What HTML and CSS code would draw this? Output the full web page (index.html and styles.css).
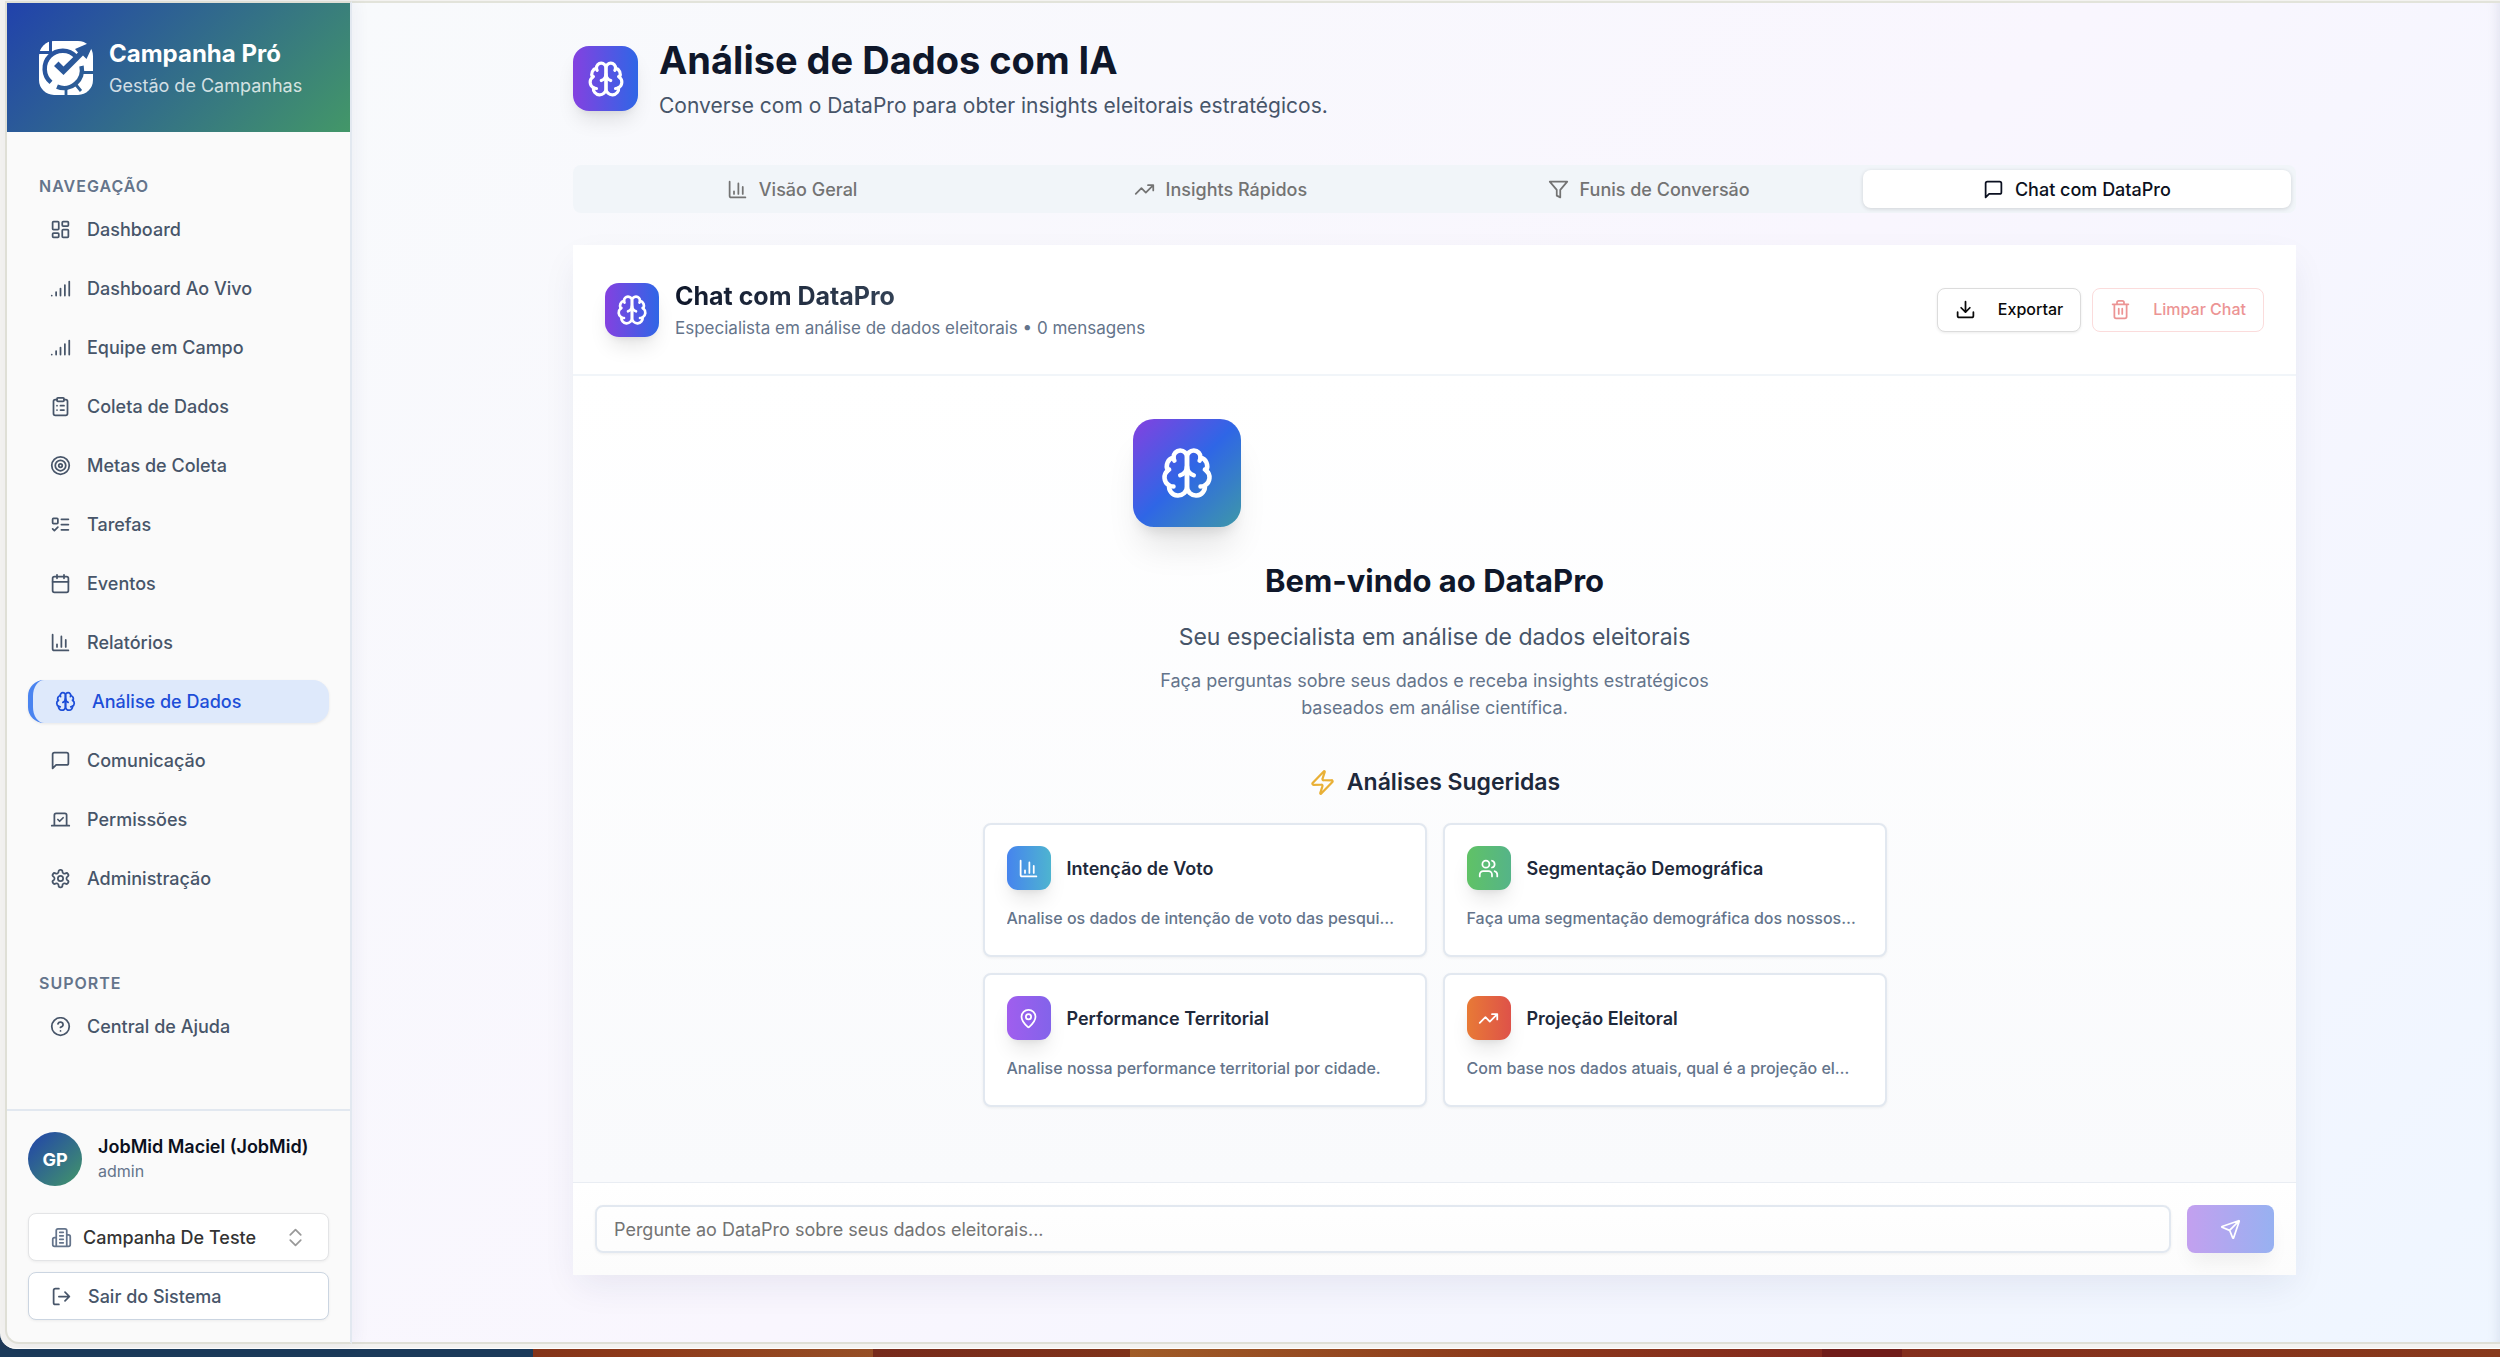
FILE: index.html
```html
<!DOCTYPE html>
<html lang="pt-BR">
<head>
<meta charset="utf-8">
<meta name="viewport" content="width=device-width, initial-scale=1">
<title>Campanha Pró – Análise de Dados com IA</title>
<link rel="stylesheet" href="styles.css">
</head>
<body>
<svg class="sprite" aria-hidden="true">
  <symbol id="i-dashboard" viewBox="0 0 24 24"><rect width="7" height="9" x="3" y="3" rx="1"/><rect width="7" height="5" x="14" y="3" rx="1"/><rect width="7" height="9" x="14" y="12" rx="1"/><rect width="7" height="5" x="3" y="16" rx="1"/></symbol>
  <symbol id="i-signal" viewBox="0 0 24 24"><path d="M2 20h.01M7 20v-4M12 20v-8M17 20V8M22 4v16"/></symbol>
  <symbol id="i-clipboard" viewBox="0 0 24 24"><rect width="8" height="4" x="8" y="2" rx="1"/><path d="M16 4h2a2 2 0 0 1 2 2v14a2 2 0 0 1-2 2H6a2 2 0 0 1-2-2V6a2 2 0 0 1 2-2h2M12 11h4M12 16h4M8 11h.01M8 16h.01"/></symbol>
  <symbol id="i-target" viewBox="0 0 24 24"><circle cx="12" cy="12" r="10"/><circle cx="12" cy="12" r="6"/><circle cx="12" cy="12" r="2"/></symbol>
  <symbol id="i-tasks" viewBox="0 0 24 24"><rect x="3" y="5" width="6" height="6" rx="1"/><path d="m3 17 2 2 4-4M13 6h8M13 12h8M13 18h8"/></symbol>
  <symbol id="i-calendar" viewBox="0 0 24 24"><path d="M8 2v4M16 2v4M3 10h18"/><rect width="18" height="18" x="3" y="4" rx="2"/></symbol>
  <symbol id="i-chart" viewBox="0 0 24 24"><path d="M3 3v16a2 2 0 0 0 2 2h16M18 17V9M13 17V5M8 17v-3"/></symbol>
  <symbol id="i-brain" viewBox="0 0 24 24"><path d="M12 5a3 3 0 1 0-5.997.125 4 4 0 0 0-2.526 5.77 4 4 0 0 0 .556 6.588A4 4 0 1 0 12 18Z"/><path d="M12 5a3 3 0 1 1 5.997.125 4 4 0 0 1 2.526 5.77 4 4 0 0 1-.556 6.588A4 4 0 1 1 12 18Z"/><path d="M15 13a4.5 4.5 0 0 1-3-4 4.5 4.5 0 0 1-3 4M17.599 6.5a3 3 0 0 0 .399-1.375M6.003 5.125A3 3 0 0 0 6.401 6.5M3.477 10.896a4 4 0 0 1 .585-.396M19.938 10.5a4 4 0 0 1 .585.396M6 18a4 4 0 0 1-1.967-.516M19.967 17.484A4 4 0 0 1 18 18"/></symbol>
  <symbol id="i-message" viewBox="0 0 24 24"><path d="M21 15a2 2 0 0 1-2 2H7l-4 4V5a2 2 0 0 1 2-2h14a2 2 0 0 1 2 2z"/></symbol>
  <symbol id="i-vote" viewBox="0 0 24 24"><path d="m9 12 2 2 4-4M5 7c0-1.1.9-2 2-2h10a2 2 0 0 1 2 2v12H5V7ZM22 19H2"/></symbol>
  <symbol id="i-settings" viewBox="0 0 24 24"><path d="M12.22 2h-.44a2 2 0 0 0-2 2v.18a2 2 0 0 1-1 1.73l-.43.25a2 2 0 0 1-2 0l-.15-.08a2 2 0 0 0-2.73.73l-.22.38a2 2 0 0 0 .73 2.73l.15.1a2 2 0 0 1 1 1.72v.51a2 2 0 0 1-1 1.74l-.15.09a2 2 0 0 0-.73 2.73l.22.38a2 2 0 0 0 2.73.73l.15-.08a2 2 0 0 1 2 0l.43.25a2 2 0 0 1 1 1.73V20a2 2 0 0 0 2 2h.44a2 2 0 0 0 2-2v-.18a2 2 0 0 1 1-1.73l.43-.25a2 2 0 0 1 2 0l.15.08a2 2 0 0 0 2.73-.73l.22-.39a2 2 0 0 0-.73-2.73l-.15-.08a2 2 0 0 1-1-1.74v-.5a2 2 0 0 1 1-1.74l.15-.09a2 2 0 0 0 .73-2.73l-.22-.38a2 2 0 0 0-2.73-.73l-.15.08a2 2 0 0 1-2 0l-.43-.25a2 2 0 0 1-1-1.73V4a2 2 0 0 0-2-2z"/><circle cx="12" cy="12" r="3"/></symbol>
  <symbol id="i-help" viewBox="0 0 24 24"><circle cx="12" cy="12" r="10"/><path d="M9.09 9a3 3 0 0 1 5.83 1c0 2-3 3-3 3M12 17h.01"/></symbol>
  <symbol id="i-building" viewBox="0 0 24 24"><path d="M6 22V4a2 2 0 0 1 2-2h8a2 2 0 0 1 2 2v18ZM6 12H4a2 2 0 0 0-2 2v6a2 2 0 0 0 2 2h2M18 9h2a2 2 0 0 1 2 2v9a2 2 0 0 1-2 2h-2M10 6h4M10 10h4M10 14h4M10 18h4"/></symbol>
  <symbol id="i-chevrons" viewBox="0 0 24 24"><path d="m6 15 6 6 6-6M6 9l6-6 6 6"/></symbol>
  <symbol id="i-logout" viewBox="0 0 24 24"><path d="M9 21H5a2 2 0 0 1-2-2V5a2 2 0 0 1 2-2h4M16 17l5-5-5-5M21 12H9"/></symbol>
  <symbol id="i-trend" viewBox="0 0 24 24"><path d="m22 7-8.500 8.500-5-5L2 17M16 7h6v6"/></symbol>
  <symbol id="i-funnel" viewBox="0 0 24 24"><path d="M22 3H2l8 9.460V19l4 2v-8.540L22 3z"/></symbol>
  <symbol id="i-download" viewBox="0 0 24 24"><path d="M21 15v4a2 2 0 0 1-2 2H5a2 2 0 0 1-2-2v-4M7 10l5 5 5-5M12 15V3"/></symbol>
  <symbol id="i-trash" viewBox="0 0 24 24"><path d="M3 6h18M19 6v14a2 2 0 0 1-2 2H7a2 2 0 0 1-2-2V6M8 6V4a2 2 0 0 1 2-2h4a2 2 0 0 1 2 2v2M10 11v6M14 11v6"/></symbol>
  <symbol id="i-zap" viewBox="0 0 24 24"><path d="M4 14a1 1 0 0 1-.78-1.630l9.900-10.200a.5.5 0 0 1 .86.460l-1.920 6.020A1 1 0 0 0 13 10h7a1 1 0 0 1 .78 1.630l-9.900 10.200a.5.5 0 0 1-.86-.460l1.920-6.020A1 1 0 0 0 11 14z"/></symbol>
  <symbol id="i-users" viewBox="0 0 24 24"><path d="M16 21v-2a4 4 0 0 0-4-4H6a4 4 0 0 0-4 4v2"/><circle cx="9" cy="7" r="4"/><path d="M22 21v-2a4 4 0 0 0-3-3.870M16 3.130a4 4 0 0 1 0 7.750"/></symbol>
  <symbol id="i-pin" viewBox="0 0 24 24"><path d="M20 10c0 4.993-5.539 10.193-7.399 11.799a1 1 0 0 1-1.202 0C9.539 20.193 4 14.993 4 10a8 8 0 0 1 16 0"/><circle cx="12" cy="10" r="3"/></symbol>
  <symbol id="i-send" viewBox="0 0 24 24"><path d="M14.536 21.686a.5.5 0 0 0 .937-.024l6.500-19a.496.496 0 0 0-.635-.635l-19 6.500a.5.5 0 0 0-.024.937l7.930 3.180a2 2 0 0 1 1.112 1.110zM21.854 2.147l-10.940 10.939"/></symbol>
</svg>

<div class="desktop">
  <div class="window">
    <aside class="sidebar">
      <header class="brand">
        <svg class="brand-logo" viewBox="0 0 54 54" aria-hidden="true">
          <defs>
            <mask id="logo-mask">
              <rect width="54" height="54" rx="15" fill="#fff"/>
              <path d="M11.500 0V12.500M0 11.500H13" fill="none" stroke="#000" stroke-width="3"/>
              <path d="M37 15.600A18 18 0 1 0 12 41.400M42.500 25A18 18 0 0 1 18 45.600" fill="none" stroke="#000" stroke-width="4.500"/>
              <path d="M44 31.500H54M27 46V54M35.500 42L42 50" stroke="#000" stroke-width="2.800"/>
              <path d="M15 25L19.500 20.500L24.500 25.500L39 11.500L36 8L50 2L54 0L54 4L47.500 18L44 14.500L24.500 34Z" fill="#000"/>
            </mask>
          </defs>
          <rect width="54" height="54" fill="#fff" mask="url(#logo-mask)"/>
        </svg>
        <div class="brand-text">
          <p class="brand-name">Campanha Pró</p>
          <p class="brand-tag">Gestão de Campanhas</p>
        </div>
      </header>

      <nav class="nav" aria-label="Navegação">
        <h2 class="nav-label">Navegação</h2>
        <ul class="nav-list">
          <li><a class="nav-item" href="#"><svg class="icon"><use href="#i-dashboard"/></svg>Dashboard</a></li>
          <li><a class="nav-item" href="#"><svg class="icon"><use href="#i-signal"/></svg>Dashboard Ao Vivo</a></li>
          <li><a class="nav-item" href="#"><svg class="icon"><use href="#i-signal"/></svg>Equipe em Campo</a></li>
          <li><a class="nav-item" href="#"><svg class="icon"><use href="#i-clipboard"/></svg>Coleta de Dados</a></li>
          <li><a class="nav-item" href="#"><svg class="icon"><use href="#i-target"/></svg>Metas de Coleta</a></li>
          <li><a class="nav-item" href="#"><svg class="icon"><use href="#i-tasks"/></svg>Tarefas</a></li>
          <li><a class="nav-item" href="#"><svg class="icon"><use href="#i-calendar"/></svg>Eventos</a></li>
          <li><a class="nav-item" href="#"><svg class="icon"><use href="#i-chart"/></svg>Relatórios</a></li>
          <li><a class="nav-item nav-item-active" href="#" aria-current="page"><svg class="icon"><use href="#i-brain"/></svg>Análise de Dados</a></li>
          <li><a class="nav-item" href="#"><svg class="icon"><use href="#i-message"/></svg>Comunicação</a></li>
          <li><a class="nav-item" href="#"><svg class="icon"><use href="#i-vote"/></svg>Permissões</a></li>
          <li><a class="nav-item" href="#"><svg class="icon"><use href="#i-settings"/></svg>Administração</a></li>
        </ul>
      </nav>
      <nav class="nav" aria-label="Suporte">
        <h2 class="nav-label">Suporte</h2>
        <ul class="nav-list">
          <li><a class="nav-item" href="#"><svg class="icon"><use href="#i-help"/></svg>Central de Ajuda</a></li>
        </ul>
      </nav>

      <footer class="account">
        <div class="user">
          <span class="avatar">GP</span>
          <div>
            <p class="user-name">JobMid Maciel (JobMid)</p>
            <p class="user-role">admin</p>
          </div>
        </div>
        <button class="side-button campaign" type="button"><svg class="icon"><use href="#i-building"/></svg><span>Campanha De Teste</span><svg class="icon campaign-arrows"><use href="#i-chevrons"/></svg></button>
        <button class="side-button logout" type="button"><svg class="icon"><use href="#i-logout"/></svg>Sair do Sistema</button>
      </footer>
    </aside>

    <main class="main">
      <div class="content">
        <header class="page-head">
          <span class="tile tile-page"><svg class="icon"><use href="#i-brain"/></svg></span>
          <div>
            <h1 class="page-title">Análise de Dados com IA</h1>
            <p class="page-sub">Converse com o DataPro para obter insights eleitorais estratégicos.</p>
          </div>
        </header>

        <div class="tabs" role="tablist">
          <button class="tab" type="button" role="tab" aria-selected="false"><svg class="icon"><use href="#i-chart"/></svg>Visão Geral</button>
          <button class="tab" type="button" role="tab" aria-selected="false"><svg class="icon"><use href="#i-trend"/></svg>Insights Rápidos</button>
          <button class="tab" type="button" role="tab" aria-selected="false"><svg class="icon"><use href="#i-funnel"/></svg>Funis de Conversão</button>
          <button class="tab tab-active" type="button" role="tab" aria-selected="true"><svg class="icon"><use href="#i-message"/></svg>Chat com DataPro</button>
        </div>

        <section class="chat">
          <header class="chat-head">
            <span class="tile tile-chat"><svg class="icon"><use href="#i-brain"/></svg></span>
            <div class="chat-heading">
              <h2 class="chat-title">Chat com DataPro</h2>
              <p class="chat-sub">Especialista em análise de dados eleitorais • 0 mensagens</p>
            </div>
            <button class="chat-action" type="button"><svg class="icon"><use href="#i-download"/></svg>Exportar</button>
            <button class="chat-action chat-clear" type="button" disabled><svg class="icon"><use href="#i-trash"/></svg>Limpar Chat</button>
          </header>

          <div class="chat-body">
            <div class="welcome">
              <span class="tile tile-hero"><svg class="icon"><use href="#i-brain"/></svg></span>
              <h3 class="welcome-title">Bem-vindo ao DataPro</h3>
              <p class="welcome-lead">Seu especialista em análise de dados eleitorais</p>
              <p class="welcome-text">Faça perguntas sobre seus dados e receba insights estratégicos baseados em análise científica.</p>
            </div>
            <h4 class="suggest-title"><svg class="icon"><use href="#i-zap"/></svg>Análises Sugeridas</h4>
            <div class="suggestions">
              <button class="suggestion" type="button">
                <span class="suggestion-head"><span class="tile tile-blue"><svg class="icon"><use href="#i-chart"/></svg></span>Intenção de Voto</span>
                <span class="suggestion-text">Analise os dados de intenção de voto das pesqui…</span>
              </button>
              <button class="suggestion" type="button">
                <span class="suggestion-head"><span class="tile tile-green"><svg class="icon"><use href="#i-users"/></svg></span>Segmentação Demográfica</span>
                <span class="suggestion-text">Faça uma segmentação demográfica dos nossos…</span>
              </button>
              <button class="suggestion" type="button">
                <span class="suggestion-head"><span class="tile tile-purple"><svg class="icon"><use href="#i-pin"/></svg></span>Performance Territorial</span>
                <span class="suggestion-text">Analise nossa performance territorial por cidade.</span>
              </button>
              <button class="suggestion" type="button">
                <span class="suggestion-head"><span class="tile tile-orange"><svg class="icon"><use href="#i-trend"/></svg></span>Projeção Eleitoral</span>
                <span class="suggestion-text">Com base nos dados atuais, qual é a projeção el…</span>
              </button>
            </div>
          </div>

          <form class="composer">
            <input class="composer-input" type="text" aria-label="Mensagem" placeholder="Pergunte ao DataPro sobre seus dados eleitorais...">
            <button class="composer-send" type="button" aria-label="Enviar"><svg class="icon"><use href="#i-send"/></svg></button>
          </form>
        </section>
      </div>
    </main>
  </div>
  <div class="wallpaper"></div>
</div>
</body>
</html>
```
FILE: styles.css
```css
*,
*::before,
*::after {
  box-sizing: border-box;
}

:root {
  --slate-50: #f8fafc;
  --slate-100: #f1f5f9;
  --slate-200: #e2e8f0;
  --slate-500: #64748b;
  --slate-600: #475569;
  --slate-800: #1e293b;
  --slate-900: #0f172a;
  --shadow-lg: 0 13px 20px -4px rgb(0 0 0 / 10%), 0 5px 8px -5px rgb(0 0 0 / 10%);
}

body {
  margin: 0;
  background: #1d3857;
  color: var(--slate-900);
  font-family: Inter, "Liberation Sans", sans-serif;
  font-size: 18px;
  line-height: 27px;
}

h1, h2, h3, h4, p, ul {
  margin: 0;
  padding: 0;
}

ul {
  list-style: none;
}

button,
input {
  margin: 0;
  font: inherit;
  color: inherit;
}

.sprite {
  position: absolute;
  width: 0;
  height: 0;
}

.icon {
  flex: none;
  width: 21px;
  height: 21px;
  fill: none;
  stroke: currentColor;
  stroke-width: 2;
  stroke-linecap: round;
  stroke-linejoin: round;
}

/* Window frame over the wallpaper */
.desktop {
  display: flex;
  flex-direction: column;
  min-height: 100vh;
  background: #1d3857;
}

.window {
  display: flex;
  flex: 1;
  padding: 1px 0 4px 5px;
  background: #f3f2f0;
  border-bottom: 1px solid #fff;
  border-bottom-left-radius: 16px;
}

.wallpaper {
  height: 8px;
  background: linear-gradient(90deg, #1b3a5a 0 533px, #84341a 533px, #8e3a1a 640px, #964f26 873px, #772b1c 873px, #80331a 1130px, #a05c28 1130px, #8c3a1b 1500px, #842a1e 1822px, #701d1a 1822px 1902px, #842f1d 1902px, #883a1c);
}

/* Sidebar */
.sidebar {
  display: flex;
  flex: none;
  flex-direction: column;
  width: 347px;
  background: #fafafa;
  border: 2px solid #dfdfd6;
  border-right: 2px solid var(--slate-200);
  border-bottom-left-radius: 14px;
  box-shadow: 4px 0 16px rgb(30 41 90 / 5%);
  z-index: 1;
}

.brand {
  display: flex;
  align-items: center;
  gap: 16px;
  height: 129px;
  padding: 0 32px;
  background: linear-gradient(135deg, #2142ac, #439768);
  color: #fff;
}

.brand-logo {
  flex: none;
  width: 54px;
  height: 54px;
}

.brand-text {
  padding-top: 5px;
}

.brand-name {
  font-size: 24px;
  font-weight: 700;
  line-height: 32px;
}

.brand-tag {
  color: rgb(255 255 255 / 80%);
  line-height: 32px;
}

.nav {
  padding: 41px 21px 0;
}

.nav + .nav {
  padding-top: 70px;
}

.nav-label {
  padding: 0 11px;
  color: var(--slate-500);
  font-size: 16px;
  font-weight: 600;
  letter-spacing: 1px;
  line-height: 27px;
  text-transform: uppercase;
}

.nav-list {
  display: flex;
  flex-direction: column;
  gap: 16px;
  padding-top: 8px;
}

.nav-item {
  display: flex;
  align-items: center;
  gap: 16px;
  height: 43px;
  padding: 0 22px;
  border-radius: 16px;
  color: var(--slate-600);
  font-weight: 500;
  text-decoration: none;
}

.nav-item-active {
  background: #dee9fb;
  border-left: 5px solid #4a84f0;
  box-shadow: 0 1px 3px rgb(0 0 0 / 8%);
  color: #1d4ed8;
}

.account {
  display: flex;
  flex-direction: column;
  gap: 11px;
  margin-top: auto;
  padding: 21px 21px 22px;
  border-top: 2px solid var(--slate-200);
}

.user {
  display: flex;
  align-items: center;
  gap: 16px;
  padding-bottom: 16px;
}

.avatar {
  display: grid;
  place-items: center;
  width: 54px;
  height: 54px;
  border-radius: 50%;
  background: linear-gradient(135deg, #2142ac, #439768);
  color: #fff;
  font-weight: 700;
}

.user-name {
  color: #0b1020;
  font-weight: 600;
  line-height: 24px;
}

.user-role {
  color: var(--slate-500);
  font-size: 16px;
  line-height: 24px;
}

.side-button {
  display: flex;
  align-items: center;
  gap: 16px;
  height: 48px;
  padding: 0 22px;
  background: #fff;
  border: 1px solid #cbd5e1;
  border-radius: 8px;
  box-shadow: 0 1px 3px rgb(0 0 0 / 6%);
  color: var(--slate-600);
  font-weight: 500;
  text-align: left;
}

.campaign {
  gap: 11px;
  border-color: #e3e4e6;
  color: #333;
}

.campaign .icon {
  color: var(--slate-500);
}

.campaign .campaign-arrows {
  margin-left: auto;
  color: #999;
}

/* Main column */
.main {
  flex: 1;
  min-width: 0;
  padding: 43px 0 64px 17px;
  background: linear-gradient(135deg, #f8fafc, #f9f6fe 50%, #eff6ff);
  border-top: 2px solid #e2e3da;
  border-bottom: 2px solid #dfdfd6;
  box-shadow: inset -12px 0 12px -10px rgb(30 41 90 / 10%);
}

.content {
  max-width: 1723px;
  margin: 0 auto;
}

.tile {
  display: grid;
  flex: none;
  place-items: center;
  width: 44px;
  height: 44px;
  border-radius: 11px;
  box-shadow: var(--shadow-lg);
  color: #fff;
}

.tile-page,
.tile-chat {
  background: linear-gradient(90deg, #8441e0, #2f66e6);
}

.tile-page {
  width: 65px;
  height: 65px;
  border-radius: 16px;
}

.tile-page .icon {
  width: 38px;
  height: 38px;
}

.tile-chat {
  width: 54px;
  height: 54px;
  border-radius: 14px;
}

.tile-chat .icon {
  width: 32px;
  height: 32px;
}

.tile-hero {
  width: 108px;
  height: 108px;
  border-radius: 21px;
  background: linear-gradient(135deg, #8441e0, #2f66e6 50%, #3e98a8);
  box-shadow: 0 27px 34px -8px rgb(0 0 0 / 10%), 0 11px 14px -8px rgb(0 0 0 / 12%);
}

.tile-hero .icon {
  width: 54px;
  height: 54px;
}

.tile-blue { background: linear-gradient(90deg, #4684ee, #4eb4d0); }
.tile-green { background: linear-gradient(90deg, #60c266, #55b488); }
.tile-purple { background: linear-gradient(90deg, #a05eee, #8363ea); }
.tile-orange { background: linear-gradient(90deg, #e87a36, #de5249); }

.page-head {
  display: flex;
  align-items: flex-start;
  gap: 21px;
  margin-bottom: 43px;
}

.page-title {
  margin: -6px 0 10px;
  font-size: 38px;
  font-weight: 700;
  line-height: 40px;
}

.page-sub {
  color: var(--slate-600);
  font-size: 21px;
  line-height: 32px;
}

.tabs {
  display: grid;
  grid-template-columns: repeat(4, 1fr);
  padding: 5px;
  margin-bottom: 32px;
  border-radius: 8px;
  background: var(--slate-100);
}

.tab {
  display: flex;
  align-items: center;
  justify-content: center;
  gap: 11px;
  height: 38px;
  padding: 0;
  border: 0;
  border-radius: 8px;
  background: none;
  color: #737373;
  font-weight: 500;
}

.tab-active {
  background: #fff;
  box-shadow: 0 1px 4px rgb(0 0 0 / 14%);
  color: #0b1020;
}

/* Chat card */
.chat {
  background: #fff;
  box-shadow: 0 14px 34px -4px rgb(30 41 90 / 8%);
}

.chat-head {
  display: flex;
  align-items: center;
  gap: 11px;
  padding: 32px;
  border-bottom: 2px solid var(--slate-100);
}

.chat-heading {
  flex: 1;
  padding-left: 5px;
}

.chat-title {
  width: fit-content;
  background: linear-gradient(90deg, var(--slate-900), #334155);
  background-clip: text;
  color: transparent;
  font-size: 25px;
  font-weight: 700;
  line-height: 38px;
}

.chat-sub {
  color: var(--slate-500);
  font-size: 17px;
  line-height: 27px;
}

.chat-action {
  display: flex;
  align-items: center;
  gap: 22px;
  height: 44px;
  padding: 0 17px;
  background: #fff;
  border: 1px solid #dcdcdc;
  border-radius: 8px;
  box-shadow: 0 1px 3px rgb(0 0 0 / 8%);
  color: #0a0a0a;
  font-size: 16px;
  font-weight: 500;
}

.chat-clear {
  border-color: #fbdcdc;
  box-shadow: none;
  color: #ec9494;
}

.chat-body {
  padding: 43px 32px 75px;
  background: linear-gradient(#fff, #f9fafc);
}

.welcome {
  max-width: 603px;
  margin: 0 auto 42px;
  text-align: center;
}

.welcome-title {
  padding-top: 32px;
  font-size: 31px;
  font-weight: 700;
  line-height: 44px;
}

.welcome-lead {
  padding: 15px 0 11px;
  color: var(--slate-600);
  font-size: 23px;
  line-height: 38px;
}

.welcome-text {
  color: var(--slate-500);
}

.suggest-title {
  display: flex;
  align-items: center;
  justify-content: center;
  gap: 11px;
  margin-bottom: 22px;
  color: var(--slate-800);
  font-size: 23px;
  font-weight: 600;
  line-height: 38px;
}

.suggest-title .icon {
  width: 27px;
  height: 27px;
  color: #e9b036;
}

.suggestions {
  display: grid;
  grid-template-columns: 1fr 1fr;
  gap: 16px;
  max-width: 904px;
  margin: 0 auto;
}

.suggestion {
  display: flex;
  flex-direction: column;
  gap: 15px;
  min-width: 0;
  height: 134px;
  padding: 21px 22px;
  background: #fff;
  border: 2px solid var(--slate-200);
  border-radius: 8px;
  box-shadow: 0 1px 3px rgb(0 0 0 / 6%);
  text-align: left;
}

.suggestion-head {
  display: flex;
  align-items: center;
  gap: 16px;
  color: var(--slate-800);
  font-weight: 600;
}

.suggestion-text {
  overflow: hidden;
  color: var(--slate-500);
  font-size: 16px;
  font-weight: 500;
  text-overflow: ellipsis;
  white-space: nowrap;
}

.composer {
  display: flex;
  gap: 16px;
  padding: 22px;
  border-top: 1px solid #e9edf3;
  background: linear-gradient(#fff, #fcfcfc);
}

.composer-input {
  flex: 1;
  min-width: 0;
  height: 48px;
  padding: 0 17px;
  background: transparent;
  border: 2px solid var(--slate-200);
  border-radius: 8px;
  box-shadow: 0 1px 3px rgb(0 0 0 / 6%);
}

.composer-input::placeholder {
  color: #737373;
  opacity: 1;
}

.composer-send {
  display: grid;
  place-items: center;
  width: 87px;
  height: 48px;
  padding: 0;
  border: 0;
  border-radius: 8px;
  background: linear-gradient(90deg, #c3a0ef, #97b1f1);
  box-shadow: 0 13px 20px -4px rgb(0 0 0 / 6%);
  color: #fff;
}
```
